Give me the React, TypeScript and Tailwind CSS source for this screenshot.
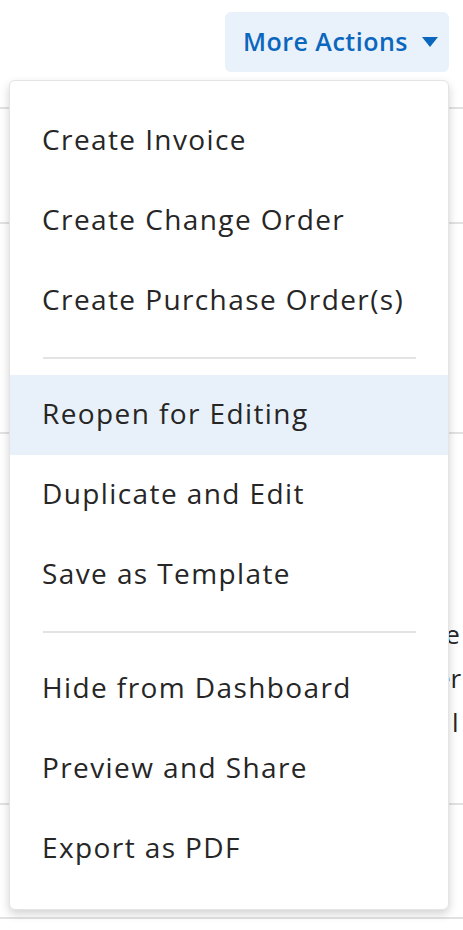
import React from "react";

type Item = { label: string; active?: boolean };

const groups: Item[][] = [
  [{ label: "Create Invoice" }, { label: "Create Change Order" }, { label: "Create Purchase Order(s)" }],
  [{ label: "Reopen for Editing", active: true }, { label: "Duplicate and Edit" }, { label: "Save as Template" }],
  [{ label: "Hide from Dashboard" }, { label: "Preview and Share" }, { label: "Export as PDF" }],
];

function MoreActionsMenu() {
  return (
    <div className="absolute left-[9px] top-[80px] w-[440px] rounded-md border border-[#e4e4e4] bg-white py-5 shadow-[0_4px_10px_rgba(0,0,0,0.18)]">
      {groups.map((group, gi) => (
        <div key={gi}>
          {gi > 0 ? (
            <div className="py-4">
              <div className="ml-[33px] mr-[32px] h-[2px] bg-[#e3e3e3]" />
            </div>
          ) : null}
          {group.map((item) => (
            <div
              key={item.label}
              className={`flex h-[80px] items-center pb-[4px] pl-[32px] text-[28px] tracking-[0.05em] text-[#262626] ${
                item.active ? "bg-[#e8f1f9]" : ""
              }`}
            >
              {item.label}
            </div>
          ))}
        </div>
      ))}
    </div>
  );
}

export default function App() {
  return (
    <div
      className="relative h-[930px] w-[463px] overflow-hidden bg-white"
      style={{ fontFamily: "'Open Sans', Lato, sans-serif" }}
    >
      <div className="flex h-[107px] items-start justify-end pr-[14px] pt-[12px]">
        <button className="flex h-[60px] items-center gap-[14px] rounded-md bg-[#e9f1fa] pl-[18px] pr-[11px] text-[25px] font-semibold tracking-[0.02em] text-[#0b67bd]">
          More Actions
          <svg width="16" height="10" viewBox="0 0 16 10">
            <path d="M0 0h16L8 10z" fill="#0b67bd" />
          </svg>
        </button>
      </div>
      <div className="h-[115px] border-t-2 border-[#e2e2e2]" />
      <div className="h-[210px] border-t-2 border-[#e2e2e2]" />
      <div className="flex h-[371px] flex-col items-start border-t-2 border-[#e2e2e2] pl-[436px] pt-[178px] text-[26px] leading-[44px] text-[#262626]">
        <span className="whitespace-nowrap">te</span>
        <span className="whitespace-nowrap">er</span>
        <span className="whitespace-nowrap pl-[16px]">l</span>
      </div>
      <div className="h-[114px] border-t-2 border-[#e2e2e2]" />
      <div className="border-t-2 border-[#e2e2e2]" />
      <MoreActionsMenu />
    </div>
  );
}
